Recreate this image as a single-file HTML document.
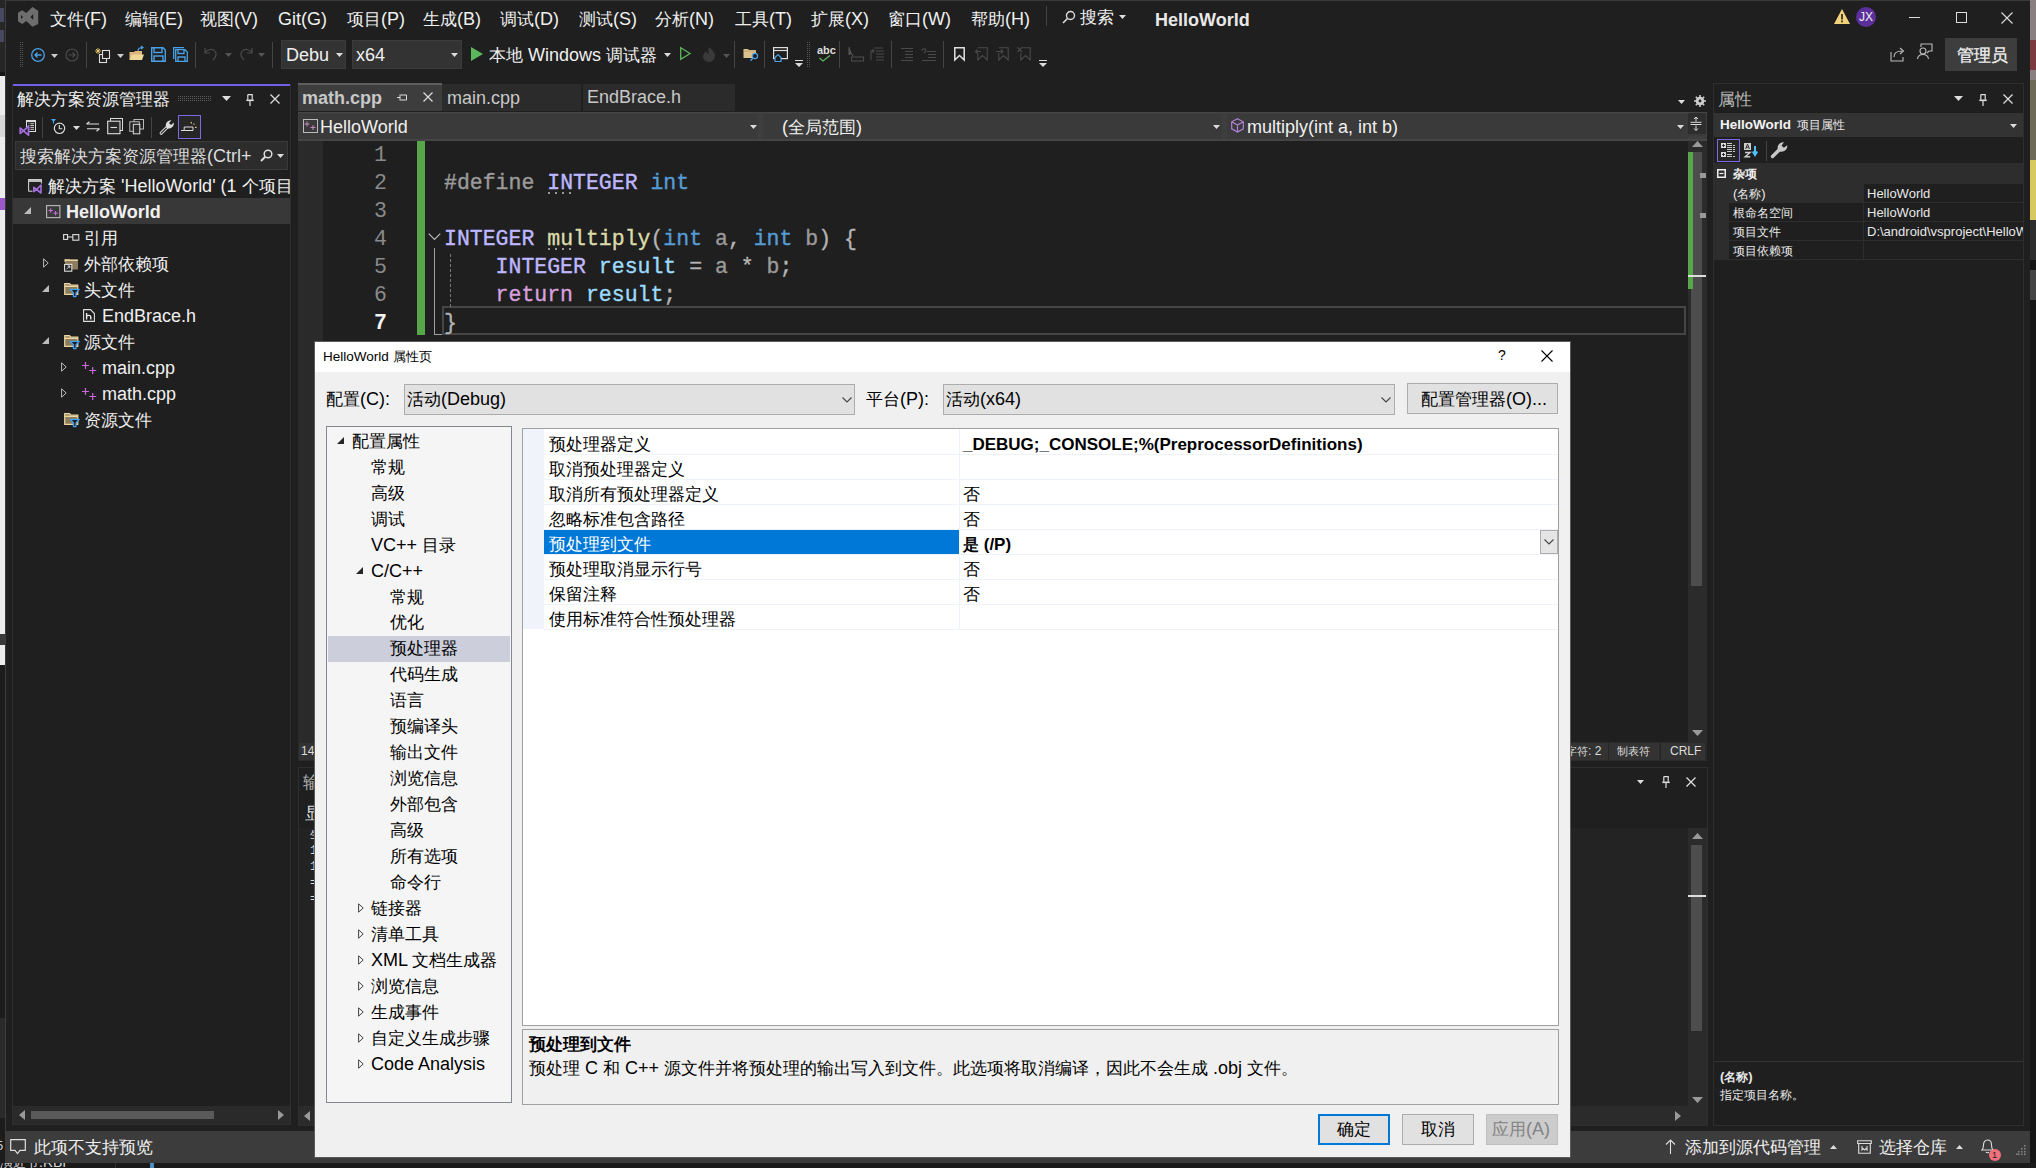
<!DOCTYPE html>
<html><head><meta charset="utf-8">
<style>
*{margin:0;padding:0;box-sizing:border-box}
html,body{width:2036px;height:1168px;overflow:hidden;background:#1f1f1f;font-family:"Liberation Sans",sans-serif;color:#f0f0f0}
.a{position:absolute;white-space:nowrap}
.t{font-size:18px;line-height:20px}
.ic{position:absolute}
svg{position:absolute;overflow:visible}
.mono{font-family:"Liberation Mono",monospace}
.code{font-size:21.5px;line-height:28px;white-space:pre;-webkit-text-stroke:0.35px currentColor}
.code span{-webkit-text-stroke:0.35px currentColor}
.ln{font-size:21.5px;line-height:28px}
.dt{font-size:18px;line-height:22px;color:#000}
.dt b{font-weight:bold;font-size:17px}
i.c{font-style:normal;font-size:0.94em}
</style></head><body>
<!-- outer desktop strip -->
<div class="a" style="left:0;top:0;width:5px;height:72px;background:#262626"></div>
<div class="a" style="left:5px;top:0;width:2025px;height:1px;background:#3a3a3a"></div>
<div class="a" style="left:0;top:8px;width:4px;height:14px;background:#6a6aa0;opacity:.5"></div>
<div class="a" style="left:0;top:30px;width:4px;height:12px;background:#6a6aa0;opacity:.5"></div>
<div class="a" style="left:0;top:72px;width:5px;height:4px;background:#161616"></div>
<div class="a" style="left:0;top:76px;width:5px;height:558px;background:#ececec"></div>
<div class="a" style="left:0;top:115px;width:5px;height:22px;background:#d8d8d8"></div>
<div class="a" style="left:0;top:198px;width:5px;height:12px;background:#9b59c9"></div>
<div class="a" style="left:0;top:634px;width:5px;height:11px;background:#3a3a3a"></div>
<div class="a" style="left:0;top:645px;width:5px;height:20px;background:#ececec"></div>
<div class="a" style="left:0;top:665px;width:5px;height:503px;background:#1c1c1c"></div>
<div class="a" style="left:0;top:1018px;width:5px;height:100px;background:#2a2a2a"></div>
<div class="a" style="left:5px;top:0;width:1px;height:1131px;background:#3c3c3c"></div>
<div class="a" style="left:2030px;top:0;width:6px;height:1168px;background:#161616"></div>
<div class="a" style="left:2030px;top:0;width:6px;height:80px;background:#8a7f80"></div>
<div class="a" style="left:2030px;top:40px;width:6px;height:30px;background:#7a3a40"></div>
<div class="a" style="left:2030px;top:80px;width:6px;height:80px;background:#6d6a58"></div>
<div class="a" style="left:2030px;top:160px;width:6px;height:60px;background:#d8c860"></div>
<div class="a" style="left:2030px;top:220px;width:6px;height:40px;background:#2e2e2e"></div>
<div class="a" style="left:2030px;top:270px;width:6px;height:30px;background:#444"></div>
<!-- MENU BAR -->
<div id="menubar">
<svg style="left:18px;top:7px" width="21" height="21" viewBox="0 0 21 21"><path d="M0 5.8 L4.2 3.2 L8.3 6.1 L14.4 0 L20.2 3.8 V16.9 L14.4 19.8 L8.3 14 L4.2 16.9 L0 14.3Z M3 8 L5 10 L3 12.2Z M15.2 7 L12.4 10 L15.2 13Z" fill="#6e6e6e" fill-rule="evenodd"/></svg>
<div class="a t" style="left:50px;top:9px"><i class="c">文件</i>(F)</div>
<div class="a t" style="left:125px;top:9px"><i class="c">编辑</i>(E)</div>
<div class="a t" style="left:200px;top:9px"><i class="c">视图</i>(V)</div>
<div class="a t" style="left:278px;top:9px">Git(G)</div>
<div class="a t" style="left:347px;top:9px"><i class="c">项目</i>(P)</div>
<div class="a t" style="left:423px;top:9px"><i class="c">生成</i>(B)</div>
<div class="a t" style="left:500px;top:9px"><i class="c">调试</i>(D)</div>
<div class="a t" style="left:579px;top:9px"><i class="c">测试</i>(S)</div>
<div class="a t" style="left:655px;top:9px"><i class="c">分析</i>(N)</div>
<div class="a t" style="left:735px;top:9px"><i class="c">工具</i>(T)</div>
<div class="a t" style="left:811px;top:9px"><i class="c">扩展</i>(X)</div>
<div class="a t" style="left:888px;top:9px"><i class="c">窗口</i>(W)</div>
<div class="a t" style="left:971px;top:9px"><i class="c">帮助</i>(H)</div>
<div class="a" style="left:1046px;top:6px;width:1px;height:20px;background:#444"></div>
<svg style="left:1062px;top:10px" width="14" height="14" viewBox="0 0 14 14"><circle cx="8.5" cy="5.5" r="4" fill="none" stroke="#ddd" stroke-width="1.4"/><path d="M5.5 8.5 L1 13" stroke="#ddd" stroke-width="1.6"/></svg>
<div class="a t" style="left:1080px;top:7px"><i class="c">搜索</i></div>
<svg style="left:1119px;top:15px" width="7" height="4"><path d="M0 0 H7 L3.5 4Z" fill="#ddd"/></svg>
<div class="a" style="left:1155px;top:10px;font-size:18px;font-weight:bold;line-height:20px;color:#e8e8e8">HelloWorld</div>
<svg style="left:1834px;top:9px" width="16" height="15" viewBox="0 0 16 15"><path d="M8 0 L16 15 H0Z" fill="#f2d27a"/><rect x="7.2" y="5" width="1.6" height="5.5" fill="#1f1f1f"/><rect x="7.2" y="11.5" width="1.6" height="1.8" fill="#1f1f1f"/></svg>
<div class="a" style="left:1856px;top:7px;width:20px;height:20px;border-radius:50%;background:#5d2f9c;font-size:12px;line-height:20px;text-align:center;color:#eee">JX</div>
<div class="a" style="left:1909px;top:17px;width:11px;height:1px;background:#ddd"></div>
<div class="a" style="left:1956px;top:12px;width:11px;height:11px;border:1px solid #ddd"></div>
<svg style="left:2001px;top:12px" width="12" height="12"><path d="M0.5 0.5 L11.5 11.5 M11.5 0.5 L0.5 11.5" stroke="#ddd" stroke-width="1.1"/></svg>
</div>

<!-- TOOLBAR -->
<div id="toolbar">
<svg style="left:20px;top:42px" width="4" height="26"><g fill="#555"><rect x="0" y="0" width="1" height="1"/><rect x="2" y="0" width="1" height="1"/><rect x="0" y="2" width="1" height="1"/><rect x="2" y="2" width="1" height="1"/><rect x="0" y="4" width="1" height="1"/><rect x="2" y="4" width="1" height="1"/><rect x="0" y="6" width="1" height="1"/><rect x="2" y="6" width="1" height="1"/><rect x="0" y="8" width="1" height="1"/><rect x="2" y="8" width="1" height="1"/><rect x="0" y="10" width="1" height="1"/><rect x="2" y="10" width="1" height="1"/><rect x="0" y="12" width="1" height="1"/><rect x="2" y="12" width="1" height="1"/><rect x="0" y="14" width="1" height="1"/><rect x="2" y="14" width="1" height="1"/><rect x="0" y="16" width="1" height="1"/><rect x="2" y="16" width="1" height="1"/><rect x="0" y="18" width="1" height="1"/><rect x="2" y="18" width="1" height="1"/><rect x="0" y="20" width="1" height="1"/><rect x="2" y="20" width="1" height="1"/><rect x="0" y="22" width="1" height="1"/><rect x="2" y="22" width="1" height="1"/><rect x="0" y="24" width="1" height="1"/><rect x="2" y="24" width="1" height="1"/></g></svg>
<svg style="left:30px;top:47px" width="16" height="16"><circle cx="8" cy="8" r="6.3" fill="none" stroke="#4aa0e6" stroke-width="1.3"/><path d="M11.5 8 H5 M7.5 5.5 L5 8 L7.5 10.5" fill="none" stroke="#4aa0e6" stroke-width="1.3"/></svg>
<svg style="left:51px;top:54px" width="7" height="4"><path d="M0 0 H7 L3.5 4Z" fill="#ccc"/></svg>
<svg style="left:64px;top:47px" width="16" height="16"><circle cx="8" cy="8" r="6" fill="none" stroke="#4a4a4a" stroke-width="1.2"/><path d="M4.5 8 H11 M8.5 5.5 L11 8 L8.5 10.5" fill="none" stroke="#4a4a4a" stroke-width="1.2"/></svg>
<div class="a" style="left:86px;top:42px;width:1px;height:26px;background:#444"></div>
<svg style="left:95px;top:47px" width="16" height="17"><path d="M3 1 V7 M0 4 H6 M1 2 L5 6 M5 2 L1 6" stroke="#e8c86a" stroke-width="0.9"/><rect x="4.5" y="7.5" width="7" height="8" fill="none" stroke="#ddd" stroke-width="1.1"/><rect x="7.5" y="3.5" width="7" height="8" fill="#1f1f1f" stroke="#ddd" stroke-width="1.1"/></svg>
<svg style="left:117px;top:54px" width="7" height="4"><path d="M0 0 H7 L3.5 4Z" fill="#ccc"/></svg>
<svg style="left:129px;top:46px" width="16" height="15"><path d="M0.5 6 H5 L6 5 H13 V14 H0.5Z" fill="#dcb67a"/><path d="M0.5 14 L3 8.5 H15 L13 14Z" fill="#f0d898"/><path d="M9 5 C9 2 11 1.5 13.5 1.5 M12 0 L14 1.5 L12 3" fill="none" stroke="#4aa0e6" stroke-width="1.2"/></svg>
<svg style="left:151px;top:47px" width="15" height="15"><path d="M0.7 0.7 H12 L14.3 3 V14.3 H0.7Z M3 0.7 V5.5 H11 V0.7 M3 14.3 V9 H12 V14.3" fill="none" stroke="#4aa0e6" stroke-width="1.4"/></svg>
<svg style="left:173px;top:47px" width="15" height="15"><path d="M2.7 2.7 H12 L14.3 5 V14.3 H2.7Z M5 2.7 V6.5 H11 V2.7 M5 14.3 V10 H12 V14.3 M0.7 12 V0.7 H11" fill="none" stroke="#4aa0e6" stroke-width="1.3"/></svg>
<div class="a" style="left:195px;top:42px;width:1px;height:26px;background:#444"></div>
<svg style="left:204px;top:47px" width="14" height="14"><path d="M1 1 V6 H6 M1 6 C3 2 9 1 11.5 5 C13 8 11 11 9 13" fill="none" stroke="#4a4a4a" stroke-width="1.2"/></svg>
<svg style="left:225px;top:53px" width="7" height="4"><path d="M0 0 H7 L3.5 4Z" fill="#555"/></svg>
<svg style="left:239px;top:47px" width="14" height="14"><path d="M13 1 V6 H8 M13 6 C11 2 5 1 2.5 5 C1 8 3 11 5 13" fill="none" stroke="#4a4a4a" stroke-width="1.2"/></svg>
<svg style="left:258px;top:53px" width="7" height="4"><path d="M0 0 H7 L3.5 4Z" fill="#555"/></svg>
<div class="a" style="left:272px;top:42px;width:1px;height:26px;background:#444"></div>
<div class="a" style="left:281px;top:40px;width:65px;height:29px;background:#333;border:1px solid #3c3c3c"></div>
<div class="a t" style="left:286px;top:45px">Debu</div>
<svg style="left:336px;top:53px" width="7" height="4"><path d="M0 0 H7 L3.5 4Z" fill="#ddd"/></svg>
<div class="a" style="left:352px;top:40px;width:110px;height:29px;background:#333;border:1px solid #3c3c3c"></div>
<div class="a t" style="left:356px;top:45px">x64</div>
<svg style="left:451px;top:53px" width="7" height="4"><path d="M0 0 H7 L3.5 4Z" fill="#ddd"/></svg>
<svg style="left:471px;top:47px" width="12" height="14"><path d="M0 0 L12 7 L0 14Z" fill="#5cb85c"/></svg>
<div class="a t" style="left:489px;top:45px"><i class="c">本地</i> Windows <i class="c">调试器</i></div>
<svg style="left:664px;top:53px" width="7" height="4"><path d="M0 0 H7 L3.5 4Z" fill="#ddd"/></svg>
<svg style="left:680px;top:47px" width="11" height="13"><path d="M0.7 0.7 L10 6.5 L0.7 12.3Z" fill="none" stroke="#5cb85c" stroke-width="1.3"/></svg>
<svg style="left:702px;top:47px" width="14" height="15"><path d="M7 0 C10 3 13 5 13 9 C13 12.5 10 15 7 15 C3 15 1 12 1 9.5 C1 7 3 6 4 4 C5 6 6 7 7 7 C6 5 6 3 7 0Z" fill="#3a3a3a"/></svg>
<svg style="left:723px;top:54px" width="7" height="4"><path d="M0 0 H7 L3.5 4Z" fill="#555"/></svg>
<div class="a" style="left:734px;top:41px;width:1px;height:27px;background:#444"></div>
<svg style="left:743px;top:47px" width="16" height="15"><path d="M0.5 2 H5 L6 3 H13 V11 H0.5Z" fill="#dcc28f"/><path d="M0.5 4 H13" stroke="#b89a5e" stroke-width="0.8"/><circle cx="12" cy="9" r="2.6" fill="#1f1f1f" stroke="#4aa0e6" stroke-width="1.2"/><path d="M10 11 L7.5 13.8" stroke="#4aa0e6" stroke-width="1.4"/></svg>
<div class="a" style="left:764px;top:41px;width:1px;height:27px;background:#444"></div>
<svg style="left:773px;top:47px" width="15" height="15"><rect x="0.6" y="0.6" width="13.8" height="11" fill="none" stroke="#ddd" stroke-width="1.2"/><path d="M0.6 3.5 H14.4" stroke="#ddd" stroke-width="1.2"/><path d="M2 10.5 L5 7.5 L8 10.5 V14.5 H2Z" fill="#1f1f1f" stroke="#4aa0e6" stroke-width="1.2"/></svg>
<svg style="left:795px;top:60px" width="8" height="7"><path d="M0 0.5 H8" stroke="#ddd"/><path d="M0 3 H8 L4 7Z" fill="#ddd"/></svg>
<svg style="left:807px;top:42px" width="4" height="26"><g fill="#555"><rect x="0" y="0" width="1" height="1"/><rect x="2" y="0" width="1" height="1"/><rect x="0" y="2" width="1" height="1"/><rect x="2" y="2" width="1" height="1"/><rect x="0" y="4" width="1" height="1"/><rect x="2" y="4" width="1" height="1"/><rect x="0" y="6" width="1" height="1"/><rect x="2" y="6" width="1" height="1"/><rect x="0" y="8" width="1" height="1"/><rect x="2" y="8" width="1" height="1"/><rect x="0" y="10" width="1" height="1"/><rect x="2" y="10" width="1" height="1"/><rect x="0" y="12" width="1" height="1"/><rect x="2" y="12" width="1" height="1"/><rect x="0" y="14" width="1" height="1"/><rect x="2" y="14" width="1" height="1"/><rect x="0" y="16" width="1" height="1"/><rect x="2" y="16" width="1" height="1"/><rect x="0" y="18" width="1" height="1"/><rect x="2" y="18" width="1" height="1"/><rect x="0" y="20" width="1" height="1"/><rect x="2" y="20" width="1" height="1"/><rect x="0" y="22" width="1" height="1"/><rect x="2" y="22" width="1" height="1"/><rect x="0" y="24" width="1" height="1"/><rect x="2" y="24" width="1" height="1"/></g></svg>
<div class="a" style="left:817px;top:44px;font-size:11px;font-weight:bold;color:#ddd;line-height:12px">abc</div>
<svg style="left:819px;top:55px" width="12" height="7"><path d="M0.5 3 L4 6 L11 0.5" fill="none" stroke="#5cb85c" stroke-width="1.3"/></svg>
<div class="a" style="left:839px;top:41px;width:1px;height:27px;background:#444"></div>
<svg style="left:848px;top:47px" width="16" height="15"><path d="M1 0 V8 L3 6 L5 9" fill="#555" stroke="#555"/><rect x="3.5" y="10" width="12" height="4" fill="none" stroke="#4a4a4a" stroke-width="1.1"/></svg>
<svg style="left:870px;top:47px" width="15" height="14"><path d="M4 1 H13 M6 4 H14 M6 7 H14 M6 10 H14 M6 13 H14 M1 13 V4 H4 M2.5 2.5 L4 4 L2.5 5.5" fill="none" stroke="#4a4a4a" stroke-width="1.1"/></svg>
<div class="a" style="left:891px;top:41px;width:1px;height:27px;background:#444"></div>
<svg style="left:900px;top:47px" width="14" height="14"><path d="M1 1.5 H13 M5 4.5 H13 M5 7.5 H13 M5 10.5 H13 M1 13.5 H13" stroke="#4a4a4a" stroke-width="1.1"/></svg>
<svg style="left:921px;top:47px" width="16" height="14"><path d="M6 4.5 H15 M7 7.5 H15 M7 10.5 H15 M1 13.5 H15 M1 4 C1 1 5 1 5 4 L3 6" fill="none" stroke="#4a4a4a" stroke-width="1.1"/></svg>
<div class="a" style="left:943px;top:41px;width:1px;height:27px;background:#444"></div>
<svg style="left:954px;top:47px" width="11" height="14"><path d="M0.8 0.8 H10.2 V13 L5.5 8.5 L0.8 13Z" fill="none" stroke="#e0e0e0" stroke-width="1.5"/></svg>
<svg style="left:975px;top:47px" width="13" height="14"><path d="M2.8 0.8 H12.2 V13 L7.5 8.5 L2.8 13 V6 M0.5 4.5 H6 M2.5 2.5 L0.5 4.5 L2.5 6.5" fill="none" stroke="#4a4a4a" stroke-width="1.1"/></svg>
<svg style="left:996px;top:47px" width="13" height="14"><path d="M2.8 0.8 H12.2 V13 L7.5 8.5 L2.8 13 V6 M0 4.5 H7 M5 2.5 L7 4.5 L5 6.5" fill="none" stroke="#4a4a4a" stroke-width="1.1"/></svg>
<svg style="left:1017px;top:47px" width="14" height="14"><path d="M3.8 0.8 H13.2 V13 L8.5 8.5 L3.8 13 V6 M0.5 0.5 L5 5 M5 0.5 L0.5 5" fill="none" stroke="#4a4a4a" stroke-width="1.1"/></svg>
<svg style="left:1039px;top:60px" width="8" height="7"><path d="M0 0.5 H8" stroke="#ddd"/><path d="M0 3 H8 L4 7Z" fill="#ddd"/></svg>
<svg style="left:1890px;top:46px" width="16" height="16"><path d="M1 6 V15 H13 V11" fill="none" stroke="#bbb" stroke-width="1.1"/><path d="M4 11 C4 6 8 5 12 5 M10 2 L13.5 5 L10 8" fill="none" stroke="#bbb" stroke-width="1.1"/></svg>
<svg style="left:1917px;top:43px" width="16" height="17"><circle cx="6" cy="8" r="3" fill="none" stroke="#bbb" stroke-width="1.1"/><path d="M0.5 16 C1 12 3 11.5 6 11.5 C9 11.5 11 12 11.5 16 M4 4 V1 H15 V8 H12 L10 10" fill="none" stroke="#bbb" stroke-width="1.1"/></svg>
<div class="a" style="left:1945px;top:38px;width:72px;height:33px;background:#3d3d3d"></div>
<div class="a t" style="left:1957px;top:45px;color:#f0f0f0;-webkit-text-stroke:0.3px #f0f0f0"><i class="c">管理员</i></div>
</div>

<!-- SOLUTION EXPLORER -->
<div id="solexp">
<div class="a" style="left:12px;top:84px;width:279px;height:1041px;border:1px solid #2e2e2e;border-top:none"></div>
<div class="a" style="left:13px;top:84px;width:277px;height:2px;background:#7160e8"></div>
<div class="a t" style="left:17px;top:89px"><i class="c">解决方案资源管理器</i></div>
<svg style="left:178px;top:96px" width="34" height="5"><g fill="#5a5a5a"><rect x="0" y="0" width="1" height="1"/><rect x="2" y="0" width="1" height="1"/><rect x="4" y="0" width="1" height="1"/><rect x="6" y="0" width="1" height="1"/><rect x="8" y="0" width="1" height="1"/><rect x="10" y="0" width="1" height="1"/><rect x="12" y="0" width="1" height="1"/><rect x="14" y="0" width="1" height="1"/><rect x="16" y="0" width="1" height="1"/><rect x="18" y="0" width="1" height="1"/><rect x="20" y="0" width="1" height="1"/><rect x="22" y="0" width="1" height="1"/><rect x="24" y="0" width="1" height="1"/><rect x="26" y="0" width="1" height="1"/><rect x="28" y="0" width="1" height="1"/><rect x="30" y="0" width="1" height="1"/><rect x="32" y="0" width="1" height="1"/><rect x="0" y="2" width="1" height="1"/><rect x="2" y="2" width="1" height="1"/><rect x="4" y="2" width="1" height="1"/><rect x="6" y="2" width="1" height="1"/><rect x="8" y="2" width="1" height="1"/><rect x="10" y="2" width="1" height="1"/><rect x="12" y="2" width="1" height="1"/><rect x="14" y="2" width="1" height="1"/><rect x="16" y="2" width="1" height="1"/><rect x="18" y="2" width="1" height="1"/><rect x="20" y="2" width="1" height="1"/><rect x="22" y="2" width="1" height="1"/><rect x="24" y="2" width="1" height="1"/><rect x="26" y="2" width="1" height="1"/><rect x="28" y="2" width="1" height="1"/><rect x="30" y="2" width="1" height="1"/><rect x="32" y="2" width="1" height="1"/><rect x="0" y="4" width="1" height="1"/><rect x="2" y="4" width="1" height="1"/><rect x="4" y="4" width="1" height="1"/><rect x="6" y="4" width="1" height="1"/><rect x="8" y="4" width="1" height="1"/><rect x="10" y="4" width="1" height="1"/><rect x="12" y="4" width="1" height="1"/><rect x="14" y="4" width="1" height="1"/><rect x="16" y="4" width="1" height="1"/><rect x="18" y="4" width="1" height="1"/><rect x="20" y="4" width="1" height="1"/><rect x="22" y="4" width="1" height="1"/><rect x="24" y="4" width="1" height="1"/><rect x="26" y="4" width="1" height="1"/><rect x="28" y="4" width="1" height="1"/><rect x="30" y="4" width="1" height="1"/><rect x="32" y="4" width="1" height="1"/></g></svg>
<svg style="left:222px;top:96px" width="9" height="5"><path d="M0 0 H9 L4.5 5Z" fill="#ddd"/></svg>
<svg style="left:246px;top:94px" width="8" height="12"><path d="M1.8 0.6 H6.2 V5.8 M1.8 0.6 V5.8" fill="none" stroke="#ddd" stroke-width="1.2"/><path d="M0.3 6.3 H7.7" stroke="#ddd" stroke-width="1.6"/><path d="M4 6.5 V12" stroke="#ddd" stroke-width="1.2"/></svg>
<svg style="left:270px;top:94px" width="10" height="10"><path d="M0.5 0.5 L9.5 9.5 M9.5 0.5 L0.5 9.5" stroke="#ddd" stroke-width="1.3"/></svg>
<svg style="left:18px;top:118px" width="20" height="19"><rect x="8.5" y="2.5" width="9" height="11" fill="#1f1f1f" stroke="#ddd" stroke-width="1"/><path d="M8.5 3.5 H17.5" stroke="#ddd" stroke-width="1.2"/><path d="M10.5 5.7 H11.3 M12.3 5.7 H16 M10.5 7.5 H11.3 M12.3 7.5 H16 M10.5 9.4 H11.3 M12.3 9.4 H16 M10.5 11.3 H11.3 M12.3 11.3 H16" stroke="#ddd" stroke-width="0.9"/><path d="M2.2 10 L5.5 12.8 L10.5 8.2 V17.2 L5.5 12.8 L2.2 15.4Z" fill="#1f1f1f" stroke="#a56ee0" stroke-width="1.7" stroke-linejoin="round"/></svg>
<div class="a" style="left:42px;top:117px;width:1px;height:21px;background:#444"></div>
<svg style="left:50px;top:118px" width="17" height="17"><path d="M1 1 H6 L4 3.5 V5.5 H3 V3.5Z" fill="#3fa9f5"/><circle cx="9.5" cy="10.3" r="5.2" fill="none" stroke="#ddd" stroke-width="1.2"/><path d="M9.3 7 V10.8 H12.3" fill="none" stroke="#ddd" stroke-width="1.1"/></svg>
<svg style="left:73px;top:126px" width="7" height="4"><path d="M0 0 H7 L3.5 4Z" fill="#ddd"/></svg>
<svg style="left:86px;top:121px" width="14" height="11"><path d="M0.5 3 H13 M0.5 3 L3.5 0.8 M13.5 7.8 H1 M13.5 7.8 L10.5 10.2" fill="none" stroke="#ddd" stroke-width="1.1"/></svg>
<svg style="left:107px;top:118px" width="17" height="17"><rect x="3.5" y="0.5" width="12" height="12" fill="#1f1f1f" stroke="#ddd" stroke-width="1"/><rect x="0.7" y="3.2" width="12.3" height="12.5" fill="#2a2a2a" stroke="#ddd" stroke-width="1.1"/><path d="M3.5 9.5 H10" stroke="#ddd" stroke-width="1.1"/></svg>
<svg style="left:129px;top:119px" width="16" height="16"><rect x="5" y="0.5" width="9.5" height="9.5" fill="#1f1f1f" stroke="#ccc" stroke-width="0.9"/><rect x="0.8" y="2.8" width="9.5" height="9.5" fill="#1f1f1f" stroke="#ccc" stroke-width="0.9"/><rect x="4.3" y="5.3" width="6.5" height="9.5" fill="#2a2a2a" stroke="#ddd" stroke-width="1"/></svg>
<div class="a" style="left:151px;top:117px;width:1px;height:21px;background:#444"></div>
<svg style="left:159px;top:119px" width="16" height="16"><path d="M2.2 14.2 L8 8.4" stroke="#ddd" stroke-width="3.2" stroke-linecap="round"/><path d="M2.2 14.2 L8 8.4" stroke="#1f1f1f" stroke-width="1.2" stroke-linecap="round"/><path d="M7.5 9 C5.5 5.5 8 1 12.5 1.2 L10 4 L12 6 L14.8 3.5 C15.3 7.8 11.5 10.8 7.5 9Z" fill="#ddd"/></svg>
<div class="a" style="left:178px;top:115px;width:23px;height:24px;border:1px solid #7b6ae6;background:#262626"></div>
<svg style="left:181px;top:121px" width="17" height="11"><path d="M0 9.5 H3 M3.2 9.5 V6 H12 V9.5 H3.2" fill="none" stroke="#ddd" stroke-width="1"/><path d="M10 1 L10.6 2.4 M13.4 2.6 L12.6 3.6 M14 6.3 H15.6" stroke="#e8c86a" stroke-width="1.2"/></svg>
<div class="a" style="left:15px;top:141px;width:273px;height:29px;background:#2c2c2c;border:1px solid #3a3a3a"></div>
<div class="a t" style="left:20px;top:146px;color:#dcdcdc"><i class="c">搜索解决方案资源管理器</i>(Ctrl+</div>
<svg style="left:260px;top:149px" width="13" height="13"><circle cx="8" cy="5" r="3.8" fill="none" stroke="#ddd" stroke-width="1.5"/><path d="M5.2 7.8 L1 12" stroke="#ddd" stroke-width="2"/></svg>
<svg style="left:277px;top:154px" width="7" height="4"><path d="M0 0 H7 L3.5 4Z" fill="#ddd"/></svg>
<svg style="left:28px;top:179px" width="15" height="15"><path d="M0.6 12.2 V0.6 H13.4 V4.5" fill="none" stroke="#ccc" stroke-width="1.1"/><path d="M0.6 2 H13.4" stroke="#ccc" stroke-width="1.8"/><path d="M0.6 12.2 H4.5" stroke="#ccc" stroke-width="1.1"/><path d="M5.8 8.3 L8.6 10.5 L13 6 V14 L8.6 10.5 L5.8 12.6Z" fill="#1f1f1f" stroke="#a56ee0" stroke-width="1.6" stroke-linejoin="round"/></svg>
<div class="a t" style="left:48px;top:176px;width:242px;overflow:hidden"><i class="c">解决方案</i> 'HelloWorld' (1 <i class="c">个项目</i>)</div>
<div class="a" style="left:13px;top:198px;width:277px;height:26px;background:#383838"></div>
<svg style="left:24px;top:207px" width="7" height="7"><path d="M7 0 V7 H0Z" fill="#bbb"/></svg>
<svg style="left:46px;top:205px" width="15" height="14"><rect x="0.6" y="0.6" width="13.3" height="12" fill="#3a3a3a" stroke="#bbb" stroke-width="1.1"/><path d="M4.7 3.3 V7.7 M2.5 5.5 H6.9 M9.6 6 V10.4 M7.4 8.2 H11.8" stroke="#d070e0" stroke-width="1"/></svg>
<div class="a t" style="left:66px;top:202px;font-weight:bold">HelloWorld</div>
<svg style="left:63px;top:234px" width="17" height="7"><rect x="0.6" y="0.6" width="4" height="4.8" fill="none" stroke="#ddd" stroke-width="1.1"/><rect x="9.8" y="0.6" width="6" height="5.6" fill="#2a2a2a" stroke="#ddd" stroke-width="1.1"/><path d="M4.6 3 H9.8" stroke="#ddd" stroke-width="1.1"/></svg>
<div class="a t" style="left:84px;top:228px"><i class="c">引用</i></div>
<svg style="left:43px;top:258px" width="6" height="10"><path d="M0.6 0.8 L5.2 5 L0.6 9.2Z" fill="none" stroke="#bbb" stroke-width="1"/></svg>
<svg style="left:64px;top:258px" width="15" height="14"><path d="M1 1 H5.5 L6.5 2.2 H14 V11.5 H1Z" fill="#8c7c5c"/><path d="M1 2.2 H13.8" stroke="#e8d4a0" stroke-width="1.6"/><path d="M1 1 V4" stroke="#e8d4a0" stroke-width="1"/><rect x="0.6" y="6.4" width="7.2" height="6.8" fill="#1f1f1f" stroke="#ddd" stroke-width="1.1"/><path d="M2.7 11 L5.8 8 M3.6 8 H5.8 V10.2" fill="none" stroke="#ddd" stroke-width="1"/></svg>
<div class="a t" style="left:84px;top:254px"><i class="c">外部依赖项</i></div>
<svg style="left:42px;top:285px" width="7" height="7"><path d="M7 0 V7 H0Z" fill="#bbb"/></svg>
<svg style="left:64px;top:283px" width="16" height="15"><path d="M0.7 0.7 H5.5 L6.7 2 H13.8 V11.3 H0.7Z" fill="#8c7c5c" stroke="#ecd6a2" stroke-width="1.2"/><path d="M0.7 3.3 H13.8" stroke="#ecd6a2" stroke-width="1.4"/><path d="M6.3 6.3 H15.2 L12 10 V13.6 H9.5 V10Z" fill="#1f1f1f" stroke="#3fa0f5" stroke-width="1.3" stroke-linejoin="round"/></svg>
<div class="a t" style="left:84px;top:280px"><i class="c">头文件</i></div>
<svg style="left:83px;top:309px" width="12" height="13"><path d="M0.6 0.6 H7.5 L11.4 4.5 V12.4 H0.6Z" fill="#1f1f1f" stroke="#ddd" stroke-width="1.1"/><path d="M3.6 4 V10.5 M3.6 7.2 C4.5 6 7.8 6 7.8 8 V10.5" fill="none" stroke="#eee" stroke-width="1.4"/></svg>
<div class="a t" style="left:102px;top:306px">EndBrace.h</div>
<svg style="left:42px;top:337px" width="7" height="7"><path d="M7 0 V7 H0Z" fill="#bbb"/></svg>
<svg style="left:64px;top:335px" width="16" height="15"><path d="M0.7 0.7 H5.5 L6.7 2 H13.8 V11.3 H0.7Z" fill="#8c7c5c" stroke="#ecd6a2" stroke-width="1.2"/><path d="M0.7 3.3 H13.8" stroke="#ecd6a2" stroke-width="1.4"/><path d="M6.3 6.3 H15.2 L12 10 V13.6 H9.5 V10Z" fill="#1f1f1f" stroke="#3fa0f5" stroke-width="1.3" stroke-linejoin="round"/></svg>
<div class="a t" style="left:84px;top:332px"><i class="c">源文件</i></div>
<svg style="left:61px;top:362px" width="6" height="10"><path d="M0.6 0.8 L5.2 5 L0.6 9.2Z" fill="none" stroke="#bbb" stroke-width="1"/></svg>
<svg style="left:82px;top:362px" width="15" height="14"><path d="M3.5 0 V7 M0 3.5 H7 M10.7 5 V12 M7.2 8.5 H14.2" stroke="#c86ad8" stroke-width="1.2"/></svg>
<div class="a t" style="left:102px;top:358px">main.cpp</div>
<svg style="left:61px;top:388px" width="6" height="10"><path d="M0.6 0.8 L5.2 5 L0.6 9.2Z" fill="none" stroke="#bbb" stroke-width="1"/></svg>
<svg style="left:82px;top:388px" width="15" height="14"><path d="M3.5 0 V7 M0 3.5 H7 M10.7 5 V12 M7.2 8.5 H14.2" stroke="#c86ad8" stroke-width="1.2"/></svg>
<div class="a t" style="left:102px;top:384px">math.cpp</div>
<svg style="left:64px;top:413px" width="16" height="15"><path d="M0.7 0.7 H5.5 L6.7 2 H13.8 V11.3 H0.7Z" fill="#8c7c5c" stroke="#ecd6a2" stroke-width="1.2"/><path d="M0.7 3.3 H13.8" stroke="#ecd6a2" stroke-width="1.4"/><path d="M6.3 6.3 H15.2 L12 10 V13.6 H9.5 V10Z" fill="#1f1f1f" stroke="#3fa0f5" stroke-width="1.3" stroke-linejoin="round"/></svg>
<div class="a t" style="left:84px;top:410px"><i class="c">资源文件</i></div>
<div class="a" style="left:13px;top:1106px;width:277px;height:18px;background:#2a2a2a"></div>
<svg style="left:19px;top:1110px" width="6" height="10"><path d="M6 0 V10 L0 5Z" fill="#999"/></svg>
<div class="a" style="left:31px;top:1111px;width:183px;height:8px;background:#5a5a5a"></div>
<svg style="left:278px;top:1110px" width="6" height="10"><path d="M0 0 V10 L6 5Z" fill="#999"/></svg>
</div>

<!-- EDITOR -->
<div id="editor">
<div class="a" style="left:298px;top:83px;width:144px;height:28px;background:#3d3d3d;border-top:2px solid #5f5f5f"></div>
<div class="a t" style="left:302px;top:88px;font-weight:bold;color:#c8c8c8">math.cpp</div>
<svg style="left:397px;top:93px" width="10" height="9"><path d="M0 4.5 H3 M3 1.5 V7.5 M3.5 2 H9.5 V7 H3.5" fill="none" stroke="#ddd" stroke-width="1"/></svg>
<svg style="left:423px;top:92px" width="10" height="10"><path d="M0.5 0.5 L9.5 9.5 M9.5 0.5 L0.5 9.5" stroke="#ddd" stroke-width="1.2"/></svg>
<div class="a" style="left:442px;top:84px;width:139px;height:27px;background:#2b2b2b"></div>
<div class="a t" style="left:447px;top:88px;color:#c8c8c8">main.cpp</div>
<div class="a" style="left:583px;top:84px;width:152px;height:27px;background:#2b2b2b"></div>
<div class="a t" style="left:587px;top:87px;color:#c8c8c8">EndBrace.h</div>
<svg style="left:1678px;top:100px" width="7" height="4"><path d="M0 0 H7 L3.5 4Z" fill="#ddd"/></svg>
<svg style="left:1694px;top:95px" width="12" height="12"><circle cx="6" cy="6" r="3.2" fill="none" stroke="#ccc" stroke-width="2.2"/><path d="M6 0 V12 M0 6 H12 M1.8 1.8 L10.2 10.2 M10.2 1.8 L1.8 10.2" stroke="#ccc" stroke-width="1.6"/><circle cx="6" cy="6" r="1.4" fill="#1f1f1f"/></svg>
<div class="a" style="left:298px;top:112px;width:1409px;height:29px;background:#3e3e3e;border-top:1px solid #454545;border-bottom:2px solid #454545"></div>
<div class="a" style="left:299px;top:114px;width:459px;height:25px;background:#3a3a3a"></div>
<svg style="left:303px;top:119px" width="15" height="14"><rect x="0.5" y="0.5" width="14" height="13" fill="none" stroke="#bbb"/><path d="M4 2.5 V7.5 M1.5 5 H6.5 M10 6 V11 M7.5 8.5 H12.5" stroke="#c586c0" stroke-width="1"/></svg>
<div class="a t" style="left:320px;top:117px;color:#f0f0f0">HelloWorld</div>
<svg style="left:750px;top:125px" width="7" height="4"><path d="M0 0 H7 L3.5 4Z" fill="#ddd"/></svg>
<div class="a" style="left:763px;top:114px;width:459px;height:25px;background:#3a3a3a"></div>
<div class="a t" style="left:782px;top:117px;color:#f0f0f0">(<i class="c">全局范围</i>)</div>
<svg style="left:1213px;top:125px" width="7" height="4"><path d="M0 0 H7 L3.5 4Z" fill="#ddd"/></svg>
<div class="a" style="left:1227px;top:114px;width:461px;height:25px;background:#3a3a3a"></div>
<svg style="left:1231px;top:118px" width="13" height="15"><path d="M6.5 0.7 L12.3 3.8 V10.8 L6.5 14 L0.7 10.8 V3.8Z M0.7 3.8 L6.5 7 L12.3 3.8 M6.5 7 V14" fill="none" stroke="#b180d7" stroke-width="1.2"/></svg>
<div class="a t" style="left:1247px;top:117px;color:#f0f0f0">multiply(int a, int b)</div>
<svg style="left:1677px;top:125px" width="7" height="4"><path d="M0 0 H7 L3.5 4Z" fill="#ddd"/></svg>
<div class="a" style="left:1688px;top:113px;width:18px;height:21px;background:#2d2d2d"></div><div class="a" style="left:1688px;top:134px;width:18px;height:2px;background:#3a3a3a"></div><svg style="left:1690px;top:116px" width="14" height="16"><path d="M0.5 6.3 H11.5 M0.5 8.5 H11.5" stroke="#ddd" stroke-width="1"/><path d="M6 1 V5.5 M6 9.5 V14.5 M4 3 L6 1 L8 3 M4 12.5 L6 14.5 L8 12.5" fill="none" stroke="#ddd" stroke-width="1"/></svg>
<div class="a" style="left:298px;top:141px;width:25px;height:601px;background:#2a2a2a"></div>
<div class="a" style="left:417px;top:141px;width:8px;height:194px;background:#57a64a"></div>
<div class="a" style="left:442px;top:306px;width:1244px;height:29px;border:2px solid #464646"></div>
<div class="a mono ln" style="left:323px;top:141px;width:64px;text-align:right;color:#8a8a8a">1<br>2<br>3<br>4<br>5<br>6<br><span style="color:#f2f2f2;font-weight:bold">7</span></div>
<svg style="left:428px;top:233px" width="13" height="8"><path d="M0.7 0.7 L6.5 6.5 L12.3 0.7" fill="none" stroke="#bbb" stroke-width="1.2"/></svg>
<div class="a" style="left:434px;top:248px;width:1px;height:87px;background:#a0a0a0"></div>
<div class="a" style="left:434px;top:334px;width:8px;height:1px;background:#a0a0a0"></div>
<svg style="left:450px;top:254px" width="1" height="53"><path d="M0.5 0 V53" stroke="#777" stroke-dasharray="3 2"/></svg>
<div class="a mono code" style="left:444px;top:141px;color:#b4b4b4">
<span style="color:#9b9b9b">#define</span> <span style="color:#beb7ff">INTEGER</span> <span style="color:#569cd6">int</span>

<span style="color:#beb7ff">INTEGER</span> <span style="color:#dcdcaa">multiply</span>(<span style="color:#569cd6">int</span> <span style="color:#9a9a9a">a</span>, <span style="color:#569cd6">int</span> <span style="color:#9a9a9a">b</span>) {
    <span style="color:#beb7ff">INTEGER</span> <span style="color:#9cdcfe">result</span> = <span style="color:#9a9a9a">a</span> * <span style="color:#9a9a9a">b</span>;
    <span style="color:#d8a0df">return</span> <span style="color:#9cdcfe">result</span>;
}</div>
<svg style="left:548px;top:192px" width="26" height="2"><g fill="#999"><rect x="0" y="0" width="2" height="2"/><rect x="7" y="0" width="2" height="2"/><rect x="14" y="0" width="2" height="2"/><rect x="21" y="0" width="2" height="2"/></g></svg>
<svg style="left:548px;top:248px" width="26" height="2"><g fill="#999"><rect x="0" y="0" width="2" height="2"/><rect x="7" y="0" width="2" height="2"/><rect x="14" y="0" width="2" height="2"/><rect x="21" y="0" width="2" height="2"/></g></svg>
<div class="a" style="left:1688px;top:141px;width:19px;height:601px;background:#2b2b2b"></div>
<svg style="left:1692px;top:141px" width="11" height="6"><path d="M0 6 H11 L5.5 0Z" fill="#999"/></svg>
<div class="a" style="left:1691px;top:152px;width:11px;height:434px;background:#4d4d4d"></div>
<div class="a" style="left:1688px;top:152px;width:5px;height:137px;background:#57a64a"></div>
<div class="a" style="left:1700px;top:173px;width:6px;height:5px;background:#999"></div>
<div class="a" style="left:1700px;top:213px;width:6px;height:5px;background:#999"></div>
<div class="a" style="left:1688px;top:275px;width:18px;height:2px;background:#ddd"></div>
<svg style="left:1692px;top:730px" width="11" height="6"><path d="M0 0 H11 L5.5 6Z" fill="#999"/></svg>
<div class="a" style="left:298px;top:742px;width:1409px;height:19px;background:#2b2b2b"></div>
<div class="a" style="left:299px;top:743px;width:50px;height:17px;background:#333"></div>
<div class="a" style="left:301px;top:745px;font-size:12px;line-height:13px;color:#ddd">140</div>
<div class="a" style="left:1560px;top:743px;width:48px;height:17px;background:#333"></div>
<div class="a" style="left:1566px;top:745px;font-size:12px;line-height:13px;color:#ddd"><i class="c">字符</i>: 2</div>
<div class="a" style="left:1608px;top:743px;width:51px;height:17px;background:#333;border-left:1px solid #262626"></div>
<div class="a" style="left:1617px;top:745px;font-size:12px;line-height:13px;color:#ddd"><i class="c">制表符</i></div>
<div class="a" style="left:1660px;top:743px;width:45px;height:17px;background:#333;border-left:1px solid #262626"></div>
<div class="a" style="left:1670px;top:745px;font-size:12px;line-height:13px;color:#ddd">CRLF</div>
<div class="a" style="left:298px;top:767px;width:1410px;height:359px;border:1px solid #2e2e2e"></div>
<div class="a t" style="left:303px;top:772px;color:#b0b0b0"><i class="c">输出</i></div>
<svg style="left:1637px;top:780px" width="7" height="4"><path d="M0 0 H7 L3.5 4Z" fill="#ddd"/></svg>
<svg style="left:1662px;top:776px" width="8" height="12"><path d="M1.8 0.6 H6.2 V5.8 M1.8 0.6 V5.8" fill="none" stroke="#ddd" stroke-width="1.2"/><path d="M0.3 6.3 H7.7" stroke="#ddd" stroke-width="1.6"/><path d="M4 6.5 V12" stroke="#ddd" stroke-width="1.2"/></svg>
<svg style="left:1686px;top:777px" width="10" height="10"><path d="M0.5 0.5 L9.5 9.5 M9.5 0.5 L0.5 9.5" stroke="#ddd" stroke-width="1.3"/></svg>
<div class="a" style="left:299px;top:828px;width:1389px;height:278px;background:#232323"></div>
<div class="a t" style="left:305px;top:803px;color:#ddd"><i class="c">显示</i></div>
<div class="a mono" style="left:310px;top:827px;font-size:12px;line-height:16px;color:#ddd;white-space:pre"><i class="c">生</i>
1
1
=
=</div>
<div class="a" style="left:1688px;top:828px;width:19px;height:278px;background:#2b2b2b"></div>
<svg style="left:1692px;top:833px" width="11" height="6"><path d="M0 6 H11 L5.5 0Z" fill="#999"/></svg>
<div class="a" style="left:1691px;top:845px;width:11px;height:186px;background:#4d4d4d"></div>
<div class="a" style="left:1688px;top:895px;width:18px;height:2px;background:#ddd"></div>
<svg style="left:1692px;top:1097px" width="11" height="6"><path d="M0 0 H11 L5.5 6Z" fill="#999"/></svg>
<div class="a" style="left:299px;top:1106px;width:1408px;height:19px;background:#2b2b2b"></div>
<svg style="left:304px;top:1111px" width="6" height="10"><path d="M6 0 V10 L0 5Z" fill="#999"/></svg>
<svg style="left:1675px;top:1111px" width="6" height="10"><path d="M0 0 V10 L6 5Z" fill="#999"/></svg>
</div>

<!-- PROPERTIES -->
<div id="props">
<div class="a" style="left:1713px;top:83px;width:311px;height:1043px;border:1px solid #2e2e2e"></div>
<div class="a t" style="left:1718px;top:89px;color:#b8b8b8"><i class="c">属性</i></div>
<svg style="left:1954px;top:96px" width="9" height="5"><path d="M0 0 H9 L4.5 5Z" fill="#ddd"/></svg>
<svg style="left:1979px;top:94px" width="8" height="12"><path d="M1.8 0.6 H6.2 V5.8 M1.8 0.6 V5.8" fill="none" stroke="#ddd" stroke-width="1.2"/><path d="M0.3 6.3 H7.7" stroke="#ddd" stroke-width="1.6"/><path d="M4 6.5 V12" stroke="#ddd" stroke-width="1.2"/></svg>
<svg style="left:2003px;top:94px" width="10" height="10"><path d="M0.5 0.5 L9.5 9.5 M9.5 0.5 L0.5 9.5" stroke="#ddd" stroke-width="1.3"/></svg>
<div class="a" style="left:1714px;top:113px;width:309px;height:24px;background:#333"></div>
<div class="a" style="left:1720px;top:117px;font-size:13.5px;line-height:15px;font-weight:bold;color:#f4f4f4">HelloWorld</div>
<div class="a" style="left:1797px;top:117px;font-size:13px;line-height:15px;color:#e8e8e8"><i class="c">项目属性</i></div>
<svg style="left:2010px;top:124px" width="7" height="4"><path d="M0 0 H7 L3.5 4Z" fill="#ddd"/></svg>
<div class="a" style="left:1717px;top:139px;width:23px;height:23px;border:1px solid #7b6ae6;background:#262626"></div>
<svg style="left:1721px;top:143px" width="15" height="15"><rect x="0" y="0" width="5" height="5" fill="#ddd"/><path d="M2.5 1 V4 M1 2.5 H4" stroke="#222" stroke-width="0.9"/><rect x="0" y="9" width="5" height="5" fill="#ddd"/><path d="M2.5 10 V13 M1 11.5 H4" stroke="#222" stroke-width="0.9"/><path d="M6 0.5 H11 M6 2.5 H11 M6 4.5 H11 M6 6.5 H11 M6 8.5 H11 M6 11.5 H11 M6 13.5 H11 M12 2.5 H14 M12 4.5 H14 M12 6.5 H14 M12 8.5 H14 M12 13.5 H14" stroke="#ddd" stroke-width="0.9"/></svg>
<svg style="left:1744px;top:143px" width="16" height="16"><rect x="0" y="0" width="7" height="7" fill="#ccc"/><path d="M1.6 6 L3.5 1.2 L5.4 6 M2.3 4.3 H4.7" fill="none" stroke="#222" stroke-width="0.9"/><path d="M1 9.5 H6 L1.2 13.8 H6.2" fill="none" stroke="#ccc" stroke-width="1.5"/><path d="M11 3 V11.5 M8.8 8.5 L11 12 L13.2 8.5" fill="none" stroke="#4cc2ff" stroke-width="2"/></svg>
<div class="a" style="left:1766px;top:141px;width:1px;height:20px;background:#444"></div>
<svg style="left:1771px;top:141px" width="18" height="18"><path d="M1.5 15.5 L8.5 8.5" stroke="#c8c8c8" stroke-width="3.4" stroke-linecap="round"/><path d="M7 9 C5.5 5 8.5 0.8 13 1.2 L10.5 4.5 L12.8 6.8 L16.2 4.2 C16.8 8.5 13 11.5 9 10.5Z" fill="#c8c8c8"/></svg>
<div class="a" style="left:1714px;top:163px;width:309px;height:97px;background:#2d2d2d"></div>
<svg style="left:1717px;top:169px" width="9" height="9"><rect x="0.75" y="0.75" width="7.5" height="7.5" fill="none" stroke="#f0f0f0" stroke-width="1.5"/><path d="M2.5 4.5 H6.5" stroke="#f0f0f0" stroke-width="1.2"/></svg>
<div class="a" style="left:1733px;top:166px;font-size:13px;line-height:15px;font-weight:bold;color:#f0f0f0"><i class="c">杂项</i></div>
<div class="a" style="left:1864px;top:184px;width:159px;height:18px;background:#1f1f1f"></div>
<div class="a" style="left:1729px;top:203px;width:134px;height:18px;background:#1f1f1f"></div>
<div class="a" style="left:1864px;top:203px;width:159px;height:18px;background:#1f1f1f"></div>
<div class="a" style="left:1729px;top:222px;width:134px;height:18px;background:#1f1f1f"></div>
<div class="a" style="left:1864px;top:222px;width:159px;height:18px;background:#1f1f1f"></div>
<div class="a" style="left:1729px;top:241px;width:134px;height:18px;background:#1f1f1f"></div>
<div class="a" style="left:1864px;top:241px;width:159px;height:18px;background:#1f1f1f"></div>
<div class="a" style="left:1733px;top:186px;font-size:13px;line-height:15px;color:#e8e8e8">(<i class="c">名称</i>)</div>
<div class="a" style="left:1867px;top:186px;font-size:13px;line-height:15px;color:#e8e8e8">HelloWorld</div>
<div class="a" style="left:1733px;top:205px;font-size:13px;line-height:15px;color:#e8e8e8"><i class="c">根命名空间</i></div>
<div class="a" style="left:1867px;top:205px;font-size:13px;line-height:15px;color:#e8e8e8">HelloWorld</div>
<div class="a" style="left:1733px;top:224px;font-size:13px;line-height:15px;color:#e8e8e8"><i class="c">项目文件</i></div>
<div class="a" style="left:1867px;top:224px;width:156px;overflow:hidden;font-size:13px;line-height:15px;color:#e8e8e8">D:\android\vsproject\HelloWorld</div>
<div class="a" style="left:1733px;top:243px;font-size:13px;line-height:15px;color:#e8e8e8"><i class="c">项目依赖项</i></div>
<div class="a" style="left:1714px;top:1061px;width:309px;height:63px;border-top:1px solid #333"></div>
<div class="a" style="left:1720px;top:1069px;font-size:13px;line-height:15px;font-weight:bold;color:#e8e8e8">(<i class="c">名称</i>)</div>
<div class="a" style="left:1720px;top:1087px;font-size:13px;line-height:15px;color:#e8e8e8"><i class="c">指定项目名称。</i></div>
</div>

<!-- STATUS BAR -->
<div id="status">
<div class="a" style="left:5px;top:1131px;width:2025px;height:32px;background:#3c3c3c"></div>
<div class="a" style="left:0;top:1163px;width:2036px;height:5px;background:#1a1a1a;overflow:hidden"><div class="a" style="left:0;top:-9px;font-size:14px;line-height:16px;color:#ddd"><i class="c">演近节</i>.RBI</div><div class="a" style="left:150px;top:0;width:4px;height:5px;background:#4a90c8"></div><div class="a" style="left:115px;top:0;width:1px;height:5px;background:#333"></div></div>
<div class="a" style="left:0;top:1140px;width:5px;height:14px;overflow:hidden"><div class="a" style="left:-4px;top:-2px;font-size:13px;color:#ccc">5</div></div>
<svg style="left:10px;top:1139px" width="17" height="17"><path d="M0.7 0.7 H15.3 V11.3 H10 L7.5 14.5 L5 11.3 H0.7Z" fill="#3c3c3c" stroke="#ddd" stroke-width="1.2"/></svg>
<div class="a t" style="left:34px;top:1137px"><i class="c">此项不支持预览</i></div>
<svg style="left:1665px;top:1139px" width="11" height="15"><path d="M5.5 1 V15 M1 5.5 L5.5 1 L10 5.5" fill="none" stroke="#ddd" stroke-width="1.1"/></svg>
<div class="a t" style="left:1685px;top:1137px"><i class="c">添加到源代码管理</i></div>
<svg style="left:1830px;top:1145px" width="7" height="4"><path d="M0 4 H7 L3.5 0Z" fill="#ddd"/></svg>
<svg style="left:1857px;top:1140px" width="15" height="14"><path d="M0.7 0.7 H14.3 V3.5 H0.7Z M1.7 3.5 V13.3 H13.3 V3.5 M5 6 V10 L6.2 8.5 L7.5 10 L8.8 8.5 L10 10 V6" fill="none" stroke="#ddd" stroke-width="1.1"/></svg>
<div class="a t" style="left:1879px;top:1137px"><i class="c">选择仓库</i></div>
<svg style="left:1956px;top:1145px" width="7" height="4"><path d="M0 4 H7 L3.5 0Z" fill="#ddd"/></svg>
<svg style="left:1981px;top:1139px" width="13" height="15"><path d="M1 11 C2.5 9.5 2.5 8 2.5 6 C2.5 3 4 1 6.5 1 C9 1 10.5 3 10.5 6 C10.5 8 10.5 9.5 12 11Z M5 13 C5.5 14 7.5 14 8 13" fill="none" stroke="#ddd" stroke-width="1.1"/></svg>
<div class="a" style="left:1989px;top:1149px;width:12px;height:12px;border-radius:50%;background:#f1707b"></div>
<div class="a" style="left:1992px;top:1149px;font-size:9px;line-height:12px;color:#222">1</div>
<svg style="left:2016px;top:1145px" width="10" height="10"><g fill="#888"><rect x="8" y="0" width="1.5" height="1.5"/><rect x="5" y="3" width="1.5" height="1.5"/><rect x="8" y="3" width="1.5" height="1.5"/><rect x="2" y="6" width="1.5" height="1.5"/><rect x="5" y="6" width="1.5" height="1.5"/><rect x="8" y="6" width="1.5" height="1.5"/><rect x="0" y="8.5" width="1.5" height="1.5"/><rect x="2" y="8.5" width="1.5" height="1.5"/><rect x="5" y="8.5" width="1.5" height="1.5"/><rect x="8" y="8.5" width="1.5" height="1.5"/></g></svg>
</div>

<!-- DIALOG -->
<div id="dialog">
<div class="a" style="left:315px;top:342px;width:1255px;height:815px;background:#f0f0f0;box-shadow:0 0 0 1px #5a5a5a"></div>
<div class="a" style="left:315px;top:342px;width:1255px;height:30px;background:#fff"></div>
<div class="a" style="left:323px;top:349px;font-size:13.5px;line-height:15px;color:#000">HelloWorld <i class="c">属性页</i></div>
<div class="a" style="left:1498px;top:347px;font-size:14px;line-height:16px;color:#000">?</div>
<svg style="left:1541px;top:350px" width="12" height="12"><path d="M0.5 0.5 L11.5 11.5 M11.5 0.5 L0.5 11.5" stroke="#000" stroke-width="1.1"/></svg>
<div class="a dt" style="left:326px;top:388px"><i class="c">配置</i>(C):</div>
<div class="a" style="left:404px;top:384px;width:451px;height:31px;background:#e1e1e1;border:1px solid #adadad"></div>
<div class="a dt" style="left:407px;top:388px"><i class="c">活动</i>(Debug)</div>
<svg style="left:842px;top:397px" width="10" height="6"><path d="M0.5 0.5 L5 5 L9.5 0.5" fill="none" stroke="#444" stroke-width="1.1"/></svg>
<div class="a dt" style="left:866px;top:388px"><i class="c">平台</i>(P):</div>
<div class="a" style="left:943px;top:384px;width:452px;height:31px;background:#e1e1e1;border:1px solid #adadad"></div>
<div class="a dt" style="left:946px;top:388px"><i class="c">活动</i>(x64)</div>
<svg style="left:1381px;top:397px" width="10" height="6"><path d="M0.5 0.5 L5 5 L9.5 0.5" fill="none" stroke="#444" stroke-width="1.1"/></svg>
<div class="a" style="left:1407px;top:383px;width:151px;height:31px;background:#e1e1e1;border:1px solid #adadad"></div>
<div class="a dt" style="left:1421px;top:388px"><i class="c">配置管理器</i>(O)...</div>
<div class="a" style="left:326px;top:426px;width:186px;height:677px;background:#f5f5f5;border:1px solid #828790"></div>
<div class="a" style="left:328px;top:636px;width:182px;height:26px;background:#cccedb"></div>
<svg style="left:337px;top:437px" width="7" height="7"><path d="M7 0 V7 H0Z" fill="#262626"/></svg><div class="a dt" style="left:352px;top:430px"><i class="c">配置属性</i></div><div class="a dt" style="left:371px;top:456px"><i class="c">常规</i></div><div class="a dt" style="left:371px;top:482px"><i class="c">高级</i></div><div class="a dt" style="left:371px;top:508px"><i class="c">调试</i></div><div class="a dt" style="left:371px;top:534px">VC++ <i class="c">目录</i></div><svg style="left:356px;top:567px" width="7" height="7"><path d="M7 0 V7 H0Z" fill="#262626"/></svg><div class="a dt" style="left:371px;top:560px">C/C++</div><div class="a dt" style="left:390px;top:586px"><i class="c">常规</i></div><div class="a dt" style="left:390px;top:611px"><i class="c">优化</i></div><div class="a dt" style="left:390px;top:637px"><i class="c">预处理器</i></div><div class="a dt" style="left:390px;top:663px"><i class="c">代码生成</i></div><div class="a dt" style="left:390px;top:689px"><i class="c">语言</i></div><div class="a dt" style="left:390px;top:715px"><i class="c">预编译头</i></div><div class="a dt" style="left:390px;top:741px"><i class="c">输出文件</i></div><div class="a dt" style="left:390px;top:767px"><i class="c">浏览信息</i></div><div class="a dt" style="left:390px;top:793px"><i class="c">外部包含</i></div><div class="a dt" style="left:390px;top:819px"><i class="c">高级</i></div><div class="a dt" style="left:390px;top:845px"><i class="c">所有选项</i></div><div class="a dt" style="left:390px;top:871px"><i class="c">命令行</i></div><svg style="left:358px;top:903px" width="6" height="10"><path d="M0.6 0.8 L5.2 5 L0.6 9.2Z" fill="none" stroke="#444" stroke-width="1"/></svg><div class="a dt" style="left:371px;top:897px"><i class="c">链接器</i></div><svg style="left:358px;top:929px" width="6" height="10"><path d="M0.6 0.8 L5.2 5 L0.6 9.2Z" fill="none" stroke="#444" stroke-width="1"/></svg><div class="a dt" style="left:371px;top:923px"><i class="c">清单工具</i></div><svg style="left:358px;top:955px" width="6" height="10"><path d="M0.6 0.8 L5.2 5 L0.6 9.2Z" fill="none" stroke="#444" stroke-width="1"/></svg><div class="a dt" style="left:371px;top:949px">XML <i class="c">文档生成器</i></div><svg style="left:358px;top:981px" width="6" height="10"><path d="M0.6 0.8 L5.2 5 L0.6 9.2Z" fill="none" stroke="#444" stroke-width="1"/></svg><div class="a dt" style="left:371px;top:975px"><i class="c">浏览信息</i></div><svg style="left:358px;top:1007px" width="6" height="10"><path d="M0.6 0.8 L5.2 5 L0.6 9.2Z" fill="none" stroke="#444" stroke-width="1"/></svg><div class="a dt" style="left:371px;top:1001px"><i class="c">生成事件</i></div><svg style="left:358px;top:1033px" width="6" height="10"><path d="M0.6 0.8 L5.2 5 L0.6 9.2Z" fill="none" stroke="#444" stroke-width="1"/></svg><div class="a dt" style="left:371px;top:1027px"><i class="c">自定义生成步骤</i></div><svg style="left:358px;top:1059px" width="6" height="10"><path d="M0.6 0.8 L5.2 5 L0.6 9.2Z" fill="none" stroke="#444" stroke-width="1"/></svg><div class="a dt" style="left:371px;top:1053px">Code Analysis</div>
<div class="a" style="left:522px;top:428px;width:1037px;height:598px;background:#fff;border:1px solid #a0a0a0"></div>
<div class="a" style="left:523px;top:429px;width:21px;height:200px;background:#f0f4fa"></div>
<div class="a" style="left:959px;top:429px;width:1px;height:200px;background:#eef2f9"></div>
<div class="a dt" style="left:549px;top:433px"><i class="c">预处理器定义</i></div><div class="a dt" style="left:963px;top:433px"><b>_DEBUG;_CONSOLE;%(PreprocessorDefinitions)</b></div><div class="a" style="left:544px;top:454px;width:1014px;height:1px;background:#eef2f9"></div><div class="a dt" style="left:549px;top:458px"><i class="c">取消预处理器定义</i></div><div class="a dt" style="left:963px;top:458px"></div><div class="a" style="left:544px;top:479px;width:1014px;height:1px;background:#eef2f9"></div><div class="a dt" style="left:549px;top:483px"><i class="c">取消所有预处理器定义</i></div><div class="a dt" style="left:963px;top:483px"><i class="c">否</i></div><div class="a" style="left:544px;top:504px;width:1014px;height:1px;background:#eef2f9"></div><div class="a dt" style="left:549px;top:508px"><i class="c">忽略标准包含路径</i></div><div class="a dt" style="left:963px;top:508px"><i class="c">否</i></div><div class="a" style="left:544px;top:529px;width:1014px;height:1px;background:#eef2f9"></div><div class="a" style="left:544px;top:530px;width:415px;height:24px;background:#0078d7"></div><div class="a dt" style="left:549px;top:533px;color:#fff"><i class="c">预处理到文件</i></div><div class="a dt" style="left:963px;top:533px"><b><i class="c">是</i> (/P)</b></div><div class="a" style="left:544px;top:554px;width:1014px;height:1px;background:#eef2f9"></div><div class="a dt" style="left:549px;top:558px"><i class="c">预处理取消显示行号</i></div><div class="a dt" style="left:963px;top:558px"><i class="c">否</i></div><div class="a" style="left:544px;top:579px;width:1014px;height:1px;background:#eef2f9"></div><div class="a dt" style="left:549px;top:583px"><i class="c">保留注释</i></div><div class="a dt" style="left:963px;top:583px"><i class="c">否</i></div><div class="a" style="left:544px;top:604px;width:1014px;height:1px;background:#eef2f9"></div><div class="a dt" style="left:549px;top:608px"><i class="c">使用标准符合性预处理器</i></div><div class="a dt" style="left:963px;top:608px"></div><div class="a" style="left:544px;top:629px;width:1014px;height:1px;background:#eef2f9"></div>
<div class="a" style="left:1540px;top:530px;width:18px;height:24px;background:#e5e5e5;border:1px solid #adadad"></div>
<svg style="left:1544px;top:539px" width="10" height="6"><path d="M0.5 0.5 L5 5 L9.5 0.5" fill="none" stroke="#444" stroke-width="1.1"/></svg>
<div class="a" style="left:522px;top:1029px;width:1037px;height:76px;background:#f0f0f0;border:1px solid #a0a0a0"></div>
<div class="a dt" style="left:529px;top:1033px;font-weight:bold"><i class="c">预处理到文件</i></div>
<div class="a dt" style="left:529px;top:1057px"><i class="c">预处理</i> C <i class="c">和</i> C++ <i class="c">源文件并将预处理的输出写入到文件。此选项将取消编译，因此不会生成</i> .obj <i class="c">文件。</i></div>
<div class="a" style="left:1318px;top:1114px;width:72px;height:31px;background:#e1e1e1;border:2px solid #0078d7"></div>
<div class="a dt" style="left:1337px;top:1118px"><i class="c">确定</i></div>
<div class="a" style="left:1402px;top:1114px;width:72px;height:31px;background:#e1e1e1;border:1px solid #adadad"></div>
<div class="a dt" style="left:1421px;top:1118px"><i class="c">取消</i></div>
<div class="a" style="left:1486px;top:1114px;width:72px;height:31px;background:#cccccc;border:1px solid #bfbfbf"></div>
<div class="a dt" style="left:1492px;top:1118px;color:#838383"><i class="c">应用</i>(A)</div>
</div>
</body></html>
